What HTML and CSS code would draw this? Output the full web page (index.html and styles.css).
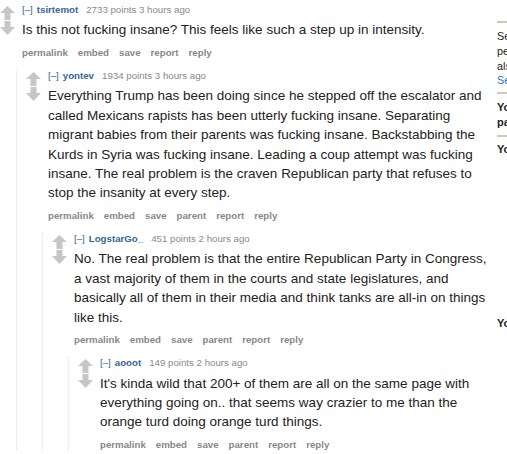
FILE: index.html
```html
<!DOCTYPE html>
<html lang="en">
<head>
<meta charset="utf-8">
<title>comments</title>
<link rel="stylesheet" href="styles.css">
</head>
<body>
<div class="page">
  <div class="main">
    <div class="comment">
      <div class="row">
        <div class="midcol">
          <svg class="arrow" viewBox="0 0 15 14" width="15" height="14"><polygon points="7.5,0 15,7 10.5,7 10.5,14 4.5,14 4.5,7 0,7"/></svg>
          <svg class="arrow" viewBox="0 0 15 14" width="15" height="14"><polygon points="4.5,0 10.5,0 10.5,6 15,6 7.5,14 0,6 4.5,6"/></svg>
        </div>
        <div class="entry">
          <p class="tagline"><span class="expand">[–]</span><span class="author">tsirtemot</span><span class="score">2733 points 3 hours ago</span></p>
          <div class="md"><p>Is this not fucking insane? This feels like such a step up in intensity.</p></div>
          <ul class="buttons"><li>permalink</li><li>embed</li><li>save</li><li>report</li><li>reply</li></ul>
        </div>
      </div>
      <div class="child">
        <div class="comment">
          <div class="row">
            <div class="midcol">
              <svg class="arrow" viewBox="0 0 15 14" width="15" height="14"><polygon points="7.5,0 15,7 10.5,7 10.5,14 4.5,14 4.5,7 0,7"/></svg>
              <svg class="arrow" viewBox="0 0 15 14" width="15" height="14"><polygon points="4.5,0 10.5,0 10.5,6 15,6 7.5,14 0,6 4.5,6"/></svg>
            </div>
            <div class="entry">
              <p class="tagline"><span class="expand">[–]</span><span class="author">yontev</span><span class="score">1934 points 3 hours ago</span></p>
              <div class="md"><p>Everything Trump has been doing since he stepped off the escalator and called Mexicans rapists has been utterly fucking insane. Separating migrant babies from their parents was fucking insane. Backstabbing the Kurds in Syria was fucking insane. Leading a coup attempt was fucking insane. The real problem is the craven Republican party that refuses to stop the insanity at every step.</p></div>
              <ul class="buttons"><li>permalink</li><li>embed</li><li>save</li><li>parent</li><li>report</li><li>reply</li></ul>
            </div>
          </div>
          <div class="child">
            <div class="comment">
              <div class="row">
                <div class="midcol">
                  <svg class="arrow" viewBox="0 0 15 14" width="15" height="14"><polygon points="7.5,0 15,7 10.5,7 10.5,14 4.5,14 4.5,7 0,7"/></svg>
                  <svg class="arrow" viewBox="0 0 15 14" width="15" height="14"><polygon points="4.5,0 10.5,0 10.5,6 15,6 7.5,14 0,6 4.5,6"/></svg>
                </div>
                <div class="entry">
                  <p class="tagline"><span class="expand">[–]</span><span class="author">LogstarGo_</span><span class="score">451 points 2 hours ago</span></p>
                  <div class="md"><p>No. The real problem is that the entire Republican Party in Congress, a vast majority of them in the courts and state legislatures, and basically all of them in their media and think tanks are all-in on things like this.</p></div>
                  <ul class="buttons"><li>permalink</li><li>embed</li><li>save</li><li>parent</li><li>report</li><li>reply</li></ul>
                </div>
              </div>
              <div class="child">
                <div class="comment">
                  <div class="row">
                    <div class="midcol">
                      <svg class="arrow" viewBox="0 0 15 14" width="15" height="14"><polygon points="7.5,0 15,7 10.5,7 10.5,14 4.5,14 4.5,7 0,7"/></svg>
                      <svg class="arrow" viewBox="0 0 15 14" width="15" height="14"><polygon points="4.5,0 10.5,0 10.5,6 15,6 7.5,14 0,6 4.5,6"/></svg>
                    </div>
                    <div class="entry">
                      <p class="tagline"><span class="expand">[–]</span><span class="author">aooot</span><span class="score">149 points 2 hours ago</span></p>
                      <div class="md"><p>It's kinda wild that 200+ of them are all on the same page with everything going on.. that seems way crazier to me than the orange turd doing orange turd things.</p></div>
                      <ul class="buttons"><li>permalink</li><li>embed</li><li>save</li><li>parent</li><li>report</li><li>reply</li></ul>
                    </div>
                  </div>
                </div>
              </div>
            </div>
          </div>
        </div>
      </div>
    </div>
  </div>
  <aside class="side">
    <div class="box box-info">
      <p class="text">Searching for posts like this?<br>people often share them<br>also in related threads.<br><span class="link">See more discussions</span></p>
    </div>
    <div class="box box-login">
      <p class="bold">You must be logged in<br>participate in voting</p>
    </div>
    <div class="box box-subs">
      <p class="bold">Your subscriptions</p>
    </div>
    <p class="bold lower">You might also like</p>
  </aside>
</div>
</body>
</html>
```

FILE: styles.css
```css
html, body {
  margin: 0;
  padding: 0;
  overflow: hidden;
  background: #ffffff;
}

body {
  font-family: "Liberation Sans", Arial, sans-serif;
  color: #222222;
}

.page {
  display: flex;
  align-items: flex-start;
  padding-top: 4px;
  width: 900px;
}

.main {
  flex: 0 0 492px;
}

.row {
  display: flex;
  align-items: flex-start;
}

.midcol {
  flex: 0 0 22px;
  display: flex;
  flex-direction: column;
  gap: 1px;
  padding-top: 2px;
}

.arrow {
  display: block;
  fill: #c6c6c6;
}

.entry {
  flex: 1;
  min-width: 0;
}

.tagline {
  margin: 0;
  font-size: 9.7px;
  line-height: 12px;
  color: #888888;
  white-space: nowrap;
}

.expand {
  color: #336699;
  margin-right: 4px;
}

.author {
  color: #336699;
  font-weight: bold;
  margin-right: 8px;
}

.md {
  margin-top: 4.3px;
  font-size: 13.5px;
  line-height: 19.4px;
  color: #222222;
}

.md p {
  margin: 0;
}

.buttons {
  list-style: none;
  margin: 7.3px 0 0;
  padding: 0;
  display: flex;
  gap: 10px;
  font-size: 9.7px;
  line-height: 12px;
  font-weight: bold;
  color: #888888;
}

.child {
  margin-left: 16px;
  margin-top: 11px;
  padding-left: 9px;
  border-left: 1px dotted #ddddff;
}

.side {
  flex: 0 0 300px;
  margin-left: 5px;
  padding-top: 17px;
  font-size: 10.8px;
  line-height: 14.8px;
  color: #222222;
}

.box {
  border-top: 2px solid #cec8b8;
}

.box-info {
  padding: 6px 0 4px;
}

.box-login {
  padding: 6px 0 5.6px;
}

.box-subs {
  padding: 4.6px 0 5px;
}

.side p {
  margin: 0;
  white-space: nowrap;
}

.link {
  color: #1f6fd6;
}

.bold {
  font-weight: bold;
  font-size: 11px;
}

.side .lower {
  margin-top: 154px;
}
```
